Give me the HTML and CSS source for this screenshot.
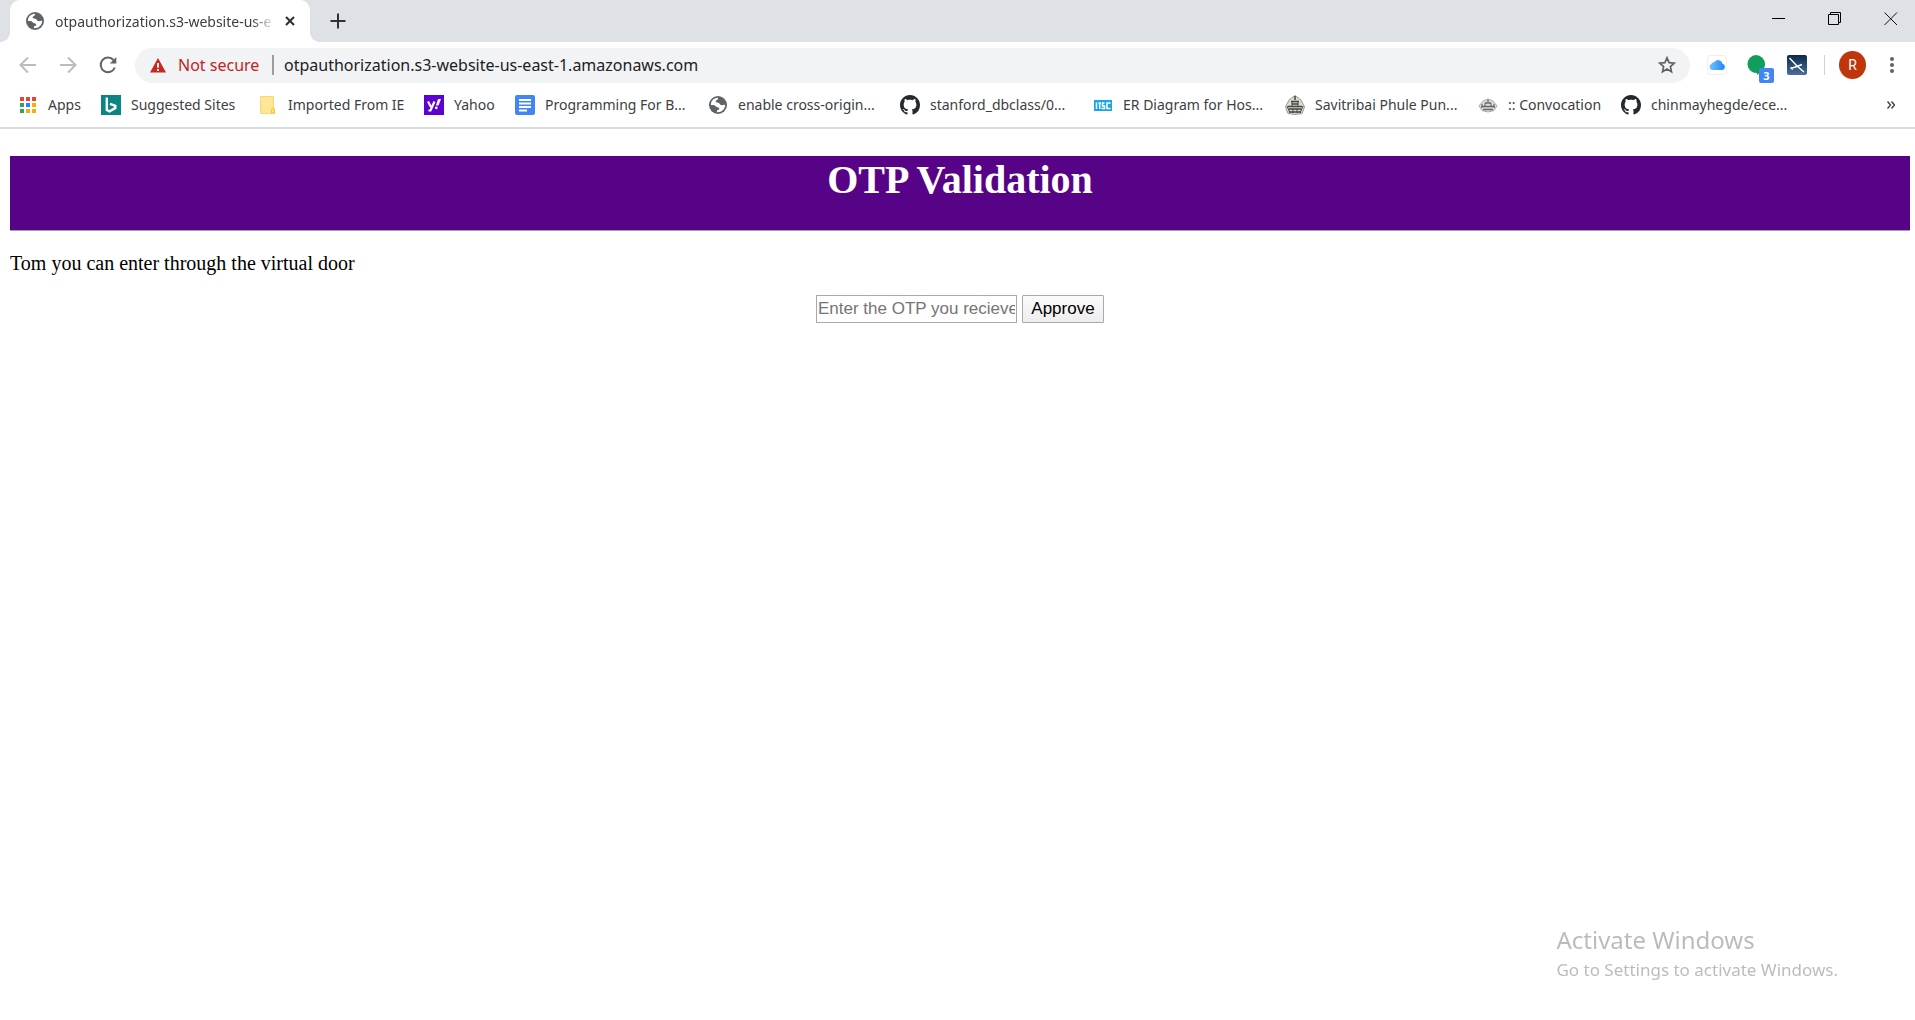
FILE: index.html
```html
<!DOCTYPE html>
<html lang="en">
<head>
<meta charset="utf-8">
<meta name="viewport" content="width=device-width, initial-scale=1">
<title>OTP Validation</title>
<link rel="stylesheet" href="styles.css">
</head>
<body>
<svg class="symbols" aria-hidden="true">
  <symbol id="globe" viewBox="0 0 20 20">
    <circle cx="10" cy="10" r="9" fill="#5f6368"/>
    <path d="M3 10C2.800 6 5.500 3 10 2.800C10.500 4 9.500 5 8 5.500C7 7 8 7.300 9.500 7.500C12 7.800 11.500 9.500 13 10C15 10.500 15.500 9.500 17.200 10C17 14 14 17.200 9.500 17.200C8.500 16.500 8.500 15.500 10 15C12 14.500 11.500 12.500 9.500 12.300C7.500 12 7.500 10 5 10Z" fill="#fff"/>
  </symbol>
  <symbol id="github" viewBox="0 0 16 16">
    <path fill="#24292e" d="M8 0C3.580 0 0 3.580 0 8c0 3.540 2.290 6.530 5.470 7.590.4.070.55-.17.55-.38 0-.19-.01-.82-.01-1.490-2.010.37-2.530-.49-2.690-.94-.09-.23-.48-.94-.82-1.130-.28-.15-.68-.52-.01-.53.63-.01 1.080.58 1.230.82.72 1.210 1.870.87 2.330.66.07-.52.28-.87.51-1.070-1.780-.2-3.640-.89-3.640-3.950 0-.87.31-1.590.82-2.150-.08-.2-.36-1.020.08-2.120 0 0 .67-.21 2.200.82.64-.18 1.320-.27 2-.27s1.360.09 2 .27c1.530-1.040 2.200-.82 2.200-.82.44 1.100.16 1.920.08 2.120.51.56.82 1.270.82 2.150 0 3.070-1.870 3.750-3.650 3.950.29.25.54.73.54 1.480 0 1.070-.01 1.930-.01 2.200 0 .21.15.46.55.38A8.010 8.010 0 0 0 16 8c0-4.420-3.580-8-8-8Z"/>
  </symbol>
</svg>

<header class="browser">
  <div class="tabstrip">
    <div class="tab">
      <svg class="icon"><use href="#globe"/></svg>
      <span class="tab-title">otpauthorization.s3-website-us-e</span>
      <button class="tab-close" aria-label="Close tab"><svg width="10" height="10" viewBox="0 0 10 10"><path d="M1 1L9 9M9 1L1 9" stroke="#2b2e31" stroke-width="2"/></svg></button>
    </div>
    <button class="new-tab" aria-label="New tab"><svg width="16" height="16" viewBox="0 0 16 16"><path d="M8 .5V15.500M.5 8H15.500" stroke="#303336" stroke-width="2"/></svg></button>
    <div class="window-buttons">
      <button aria-label="Minimize"><svg width="14" height="14" viewBox="0 0 14 14"><path d="M0 6.500H13" stroke="#000"/></svg></button>
      <button aria-label="Restore"><svg width="14" height="14" viewBox="0 0 14 14" fill="none" stroke="#000"><path d="M.5 2.500H10.500V12.500H.5ZM2.500 2.500V.5H12.500V10.500H10.500"/></svg></button>
      <button aria-label="Close"><svg width="14" height="14" viewBox="0 0 14 14"><path d="M.5.5L13 13M13 .5L.5 13" stroke="#111"/></svg></button>
    </div>
  </div>

  <div class="toolbar">
    <div class="nav">
      <button aria-label="Back"><svg width="18" height="18" viewBox="0 0 18 18" fill="none" stroke="#babcbe" stroke-width="2"><path d="M17 9H2M9 1.500L1.500 9L9 16.500"/></svg></button>
      <button aria-label="Forward"><svg width="18" height="18" viewBox="0 0 18 18" fill="none" stroke="#babcbe" stroke-width="2"><path d="M1 9H16M9 1.500L16.500 9L9 16.500"/></svg></button>
      <button aria-label="Reload"><svg width="18" height="18" viewBox="0 0 18 18"><path d="M15.800 11.500A7.300 7.300 0 1 1 14.500 4" fill="none" stroke="#5f6368" stroke-width="2"/><path d="M17.300 1V7.500H10.800Z" fill="#5f6368"/></svg></button>
    </div>
    <div class="omnibox">
      <svg class="warning" viewBox="0 0 16 15"><path d="M8 0L16 14.500H0Z" fill="#c5291f"/><path d="M8 5V9.800M8 11V13" stroke="#fff" stroke-width="1.800"/></svg>
      <span class="not-secure">Not secure</span>
      <input class="url" type="text" aria-label="Address" value="otpauthorization.s3-website-us-east-1.amazonaws.com">
      <button class="star" aria-label="Bookmark this page"><svg width="18" height="18" viewBox="0 0 18 18"><path d="M9 1.800L11.100 6.600L16.300 7.100L12.400 10.600L13.500 15.700L9 13L4.500 15.700L5.600 10.600L1.700 7.100L6.900 6.600Z" fill="none" stroke="#5f6368" stroke-width="1.700"/></svg></button>
    </div>
    <div class="extensions">
      <button aria-label="iCloud"><svg width="20" height="20" viewBox="0 0 20 20"><defs><linearGradient id="cloud"><stop stop-color="#6fc3fb"/><stop offset="1" stop-color="#2383f4"/></linearGradient></defs><rect x=".5" y=".5" width="19" height="19" rx="3" fill="#fff" stroke="#eee"/><path d="M5 15A3.300 3.300 0 0 1 4.500 8.800A3 3 0 0 1 7.500 7A4.400 4.400 0 0 1 15.500 8.800A3.200 3.200 0 0 1 15.500 15Z" fill="url(#cloud)"/></svg></button>
      <button class="chat" aria-label="Hangouts, 3 notifications"><svg width="20" height="20" viewBox="0 0 20 20"><path d="M9 0A9 9 0 0 1 18 9C18 14 14 17 10 20V18A9 9 0 1 1 9 0Z" fill="#119d5a"/></svg><span class="badge">3</span></button>
      <button aria-label="Flight extension"><svg width="20" height="20" viewBox="0 0 20 20"><defs><linearGradient id="sky" x2="0" y2="1"><stop stop-color="#0c294b"/><stop offset="1" stop-color="#4c6f98"/></linearGradient></defs><rect width="20" height="20" rx="2" fill="url(#sky)"/><path d="M2.500 3L10.500 11.500L17 17" fill="none" stroke="#fff" stroke-width="1.400"/><path d="M3.500 13.500L10 11.500L15 9.500" fill="none" stroke="#fff" stroke-width="1.600"/><path d="M4 12L5.500 15" stroke="#fff"/></svg></button>
    </div>
    <span class="divider"></span>
    <button class="avatar" aria-label="Profile">R</button>
    <button class="menu" aria-label="Menu"><svg width="4" height="18" viewBox="0 0 4 18" fill="#5f6368"><circle cx="2" cy="3" r="2"/><circle cx="2" cy="9" r="2"/><circle cx="2" cy="15" r="2"/></svg></button>
  </div>

  <nav class="bookmarks" aria-label="Bookmarks">
    <a href="#"><svg class="icon" viewBox="0 0 20 20"><g fill="#ea4335"><path d="M2 2h4v4H2zM8 2h4v4H8zM14 2h4v4h-4z"/></g><g fill="#34a15c"><path d="M2 8h4v4H2zM2 14h4v4H2z"/></g><path fill="#2586f4" d="M8 8h4v4H8z"/><g fill="#f6ae0b"><path d="M14 8h4v4h-4zM8 14h4v4H8zM14 14h4v4h-4z"/></g></svg>Apps</a>
    <a href="#"><svg class="icon" viewBox="0 0 20 20"><path fill="#0c8484" d="M0 0h20v20H0z"/><path d="M5.800 2.500V15L8.500 16.300L14.300 13V10.800L9 8.800" fill="none" stroke="#fff" stroke-width="2.400"/></svg>Suggested Sites</a>
    <a href="#"><svg class="icon" viewBox="0 0 20 20"><path d="M2.500 1.500H15.500V13.500L16.500 14.500V18.500H2.500Z" fill="#ffe694" stroke="#f5d775"/><path d="M13.500 18V14.500L15 12.500L16.500 14V18Z" fill="#ffe06d" stroke="#f0c642"/></svg>Imported From IE</a>
    <a href="#"><svg class="icon" viewBox="0 0 20 20"><path fill="#5f01d1" d="M0 0h20v20H0z"/><path d="M4 6.500L7 12M10.500 6.500L6.500 15.500H4.500" fill="none" stroke="#fff" stroke-width="2.200"/><path d="M14 4H17L14.500 10.500H12Z" fill="#fff"/><circle cx="12.300" cy="12.800" r="1.400" fill="#fff"/></svg>Yahoo</a>
    <a href="#"><svg class="icon" viewBox="0 0 20 20"><rect width="20" height="20" rx="2" fill="#4285f4"/><path d="M4 5H16M4 8.500H16M4 12H16M4 15.500H12" stroke="#fff" stroke-width="1.900"/></svg>Programming For B...</a>
    <a href="#"><svg class="icon"><use href="#globe"/></svg>enable cross-origin...</a>
    <a href="#"><svg class="icon"><use href="#github"/></svg>stanford_dbclass/0...</a>
    <a href="#"><svg class="icon" viewBox="0 0 20 20"><path fill="#18a5ea" d="M1 5h18v11H1z"/><path d="M3.500 14V7.500M5.500 8H8M6.700 8V14M11.500 8H9.500V11H11.500V13.500H8.500M17.500 8H14V13.500H17.500" fill="none" stroke="#fff" stroke-width="1.500"/></svg>ER Diagram for Hos...</a>
    <a href="#"><svg class="icon" viewBox="0 0 20 20" fill="none" stroke="#44443f"><path d="M10 .5L16 5L19.500 12L17 18.500L10 19.500L3 18.500L.5 12L4 5Z" fill="#dcdcd4" stroke="#99998f"/><path d="M10 1V5M6 6.500H14M7 9H13M3 11.500H17M4 14H16M4 17H16" stroke-width="1.500"/><path d="M7 6V12M13 6V12M2 11L5 18M18 11L15 18M8 14V18M12 14V18"/></svg>Savitribai Phule Pun...</a>
    <a href="#"><svg class="icon" viewBox="0 0 20 20" fill="none" stroke="#666"><path d="M10 4L15 6L19 11L16 15.500L10 17L4 15.500L1 11L5 6Z" fill="#ddd" stroke="#aaa"/><path d="M10 4.500V7M7 8H13M3 11.500H17M5 14.500H15" stroke-width="1.300"/><path d="M7 8V12M13 8V12M4 9V13M16 9V13"/></svg>:: Convocation</a>
    <a href="#"><svg class="icon"><use href="#github"/></svg>chinmayhegde/ece...</a>
    <button class="overflow" aria-label="More bookmarks"><svg width="8" height="8" viewBox="0 0 8 8" fill="none" stroke="#3c4043" stroke-width="1.400"><path d="M.5.5L3.500 4L.5 7.500M4.500.5L7.500 4L4.500 7.500"/></svg></button>
  </nav>
</header>

<main class="page">
  <h1 class="banner">OTP Validation</h1>
  <p class="message">Tom you can enter through the virtual door</p>
  <form class="otp-form">
    <input class="otp" type="text" placeholder="Enter the OTP you recieve" aria-label="OTP">
    <button class="approve" type="button">Approve</button>
  </form>
</main>

<aside class="watermark">
  <p class="watermark-title">Activate Windows</p>
  <p class="watermark-text">Go to Settings to activate Windows.</p>
</aside>
</body>
</html>
```
FILE: styles.css
```css
* { box-sizing: border-box; }

body {
  margin: 0;
  min-height: 100vh;
  background: #fff;
  color: #000;
  font-family: "Liberation Serif", "Times New Roman", serif;
}

button {
  display: inline-flex;
  align-items: center;
  justify-content: center;
  padding: 0;
  border: 0;
  background: none;
}

svg { display: block; flex: none; }
.symbols { position: absolute; width: 0; height: 0; }

.browser {
  border-bottom: 2px solid #dadbe0;
  font-family: "Noto Sans", "Open Sans", sans-serif;
  color: #3c4043;
}

.icon { width: 20px; height: 20px; }

/* Tab strip */
.tabstrip {
  display: flex;
  height: 42px;
  padding-left: 10px;
  background: #dee1e6;
}

.tab {
  position: relative;
  display: flex;
  align-items: center;
  width: 300px;
  padding: 0 14px 0 15px;
  border-radius: 10px 10px 0 0;
  background: #fff;
  font-size: 14px;
}

/* Flared feet on both sides of the active tab */
.tab::before,
.tab::after {
  content: "";
  position: absolute;
  bottom: 0;
  width: 10px;
  height: 10px;
}
.tab::before { left: -10px; background: radial-gradient(circle at 0 0, #dee1e6 10px, #fff 10px); }
.tab::after { right: -10px; background: radial-gradient(circle at 100% 0, #dee1e6 10px, #fff 10px); }

.tab-title {
  flex: 1;
  margin: 0 8px 0 10px;
  white-space: nowrap;
  -webkit-mask-image: linear-gradient(to left, transparent, #000 24px);
  mask-image: linear-gradient(to left, transparent, #000 24px);
}
.tab-close { width: 12px; height: 20px; }
.new-tab { width: 55px; }

.window-buttons { display: flex; height: 38px; margin-left: auto; }
.window-buttons button { width: 56px; }
.window-buttons button:last-child { width: 52px; padding-left: 4px; }

/* Toolbar */
.toolbar {
  display: flex;
  align-items: center;
  height: 46px;
  padding: 0 7px 0 8px;
}
.nav { display: flex; margin-right: 7px; }
.nav button { width: 40px; height: 36px; }

.omnibox {
  display: flex;
  flex: 1;
  align-items: center;
  height: 35px;
  padding: 0 14px 0 15px;
  border-radius: 18px;
  background: #f1f3f4;
  font-size: 16px;
}
.warning { width: 16px; height: 15px; }
.not-secure {
  width: 96px;
  margin: 0 10px 0 12px;
  border-right: 2px solid #9a9da1;
  color: #c5221f;
  line-height: 20px;
  white-space: nowrap;
}
.url {
  flex: 1;
  padding: 0;
  border: 0;
  background: none;
  color: #202124;
  font: inherit;
}

.extensions { display: flex; gap: 20px; margin-left: 17px; }
.chat { position: relative; }
.badge {
  position: absolute;
  left: 12px;
  top: 13px;
  width: 15px;
  height: 15px;
  border-radius: 2px;
  background: #4285f4;
  color: #fff;
  font: bold 11px/15px "Open Sans", sans-serif;
}
.divider { width: 1px; height: 20px; margin: 0 14px 0 17px; background: #cfd1d4; }
.avatar {
  width: 27px;
  height: 28px;
  border-radius: 50%;
  background: #bf360c;
  color: #fff;
  font: 14px Roboto, sans-serif;
}
.menu { width: 32px; height: 28px; margin-left: 10px; }

/* Bookmarks bar */
.bookmarks {
  display: grid;
  grid-template-columns: 83px 157px 166px 91px 193px 192px 193px 192px 193px 143px 1fr auto;
  height: 39px;
  padding: 0 20px 6px 18px;
}
.bookmarks a {
  display: flex;
  align-items: center;
  gap: 10px;
  color: inherit;
  font-size: 14px;
  text-decoration: none;
  white-space: nowrap;
}
.overflow { width: 8px; }

/* Page content */
.page { padding: 27px 5px 0 10px; }
.banner {
  height: 75px;
  margin: 0;
  border-bottom: 1px solid #a0a0a0;
  background: #570387;
  color: #fff;
  font-size: 40px;
  line-height: 48px;
  text-align: center;
}
.message { margin: 20px 0; font-size: 20px; line-height: 24px; }
.otp-form { display: flex; justify-content: center; gap: 5px; }
.otp,
.approve {
  height: 28px;
  border: 1px solid #a9a9a9;
  font: 17px "Liberation Sans", Arial, sans-serif;
}
.otp { width: 201px; padding: 1px; background: #fff; }
.otp::placeholder { color: #757575; }
.approve {
  width: 82px;
  border-radius: 1px;
  background: linear-gradient(#fbfbfb, #ededed);
  color: #000;
}

/* System notice floating above the page */
.watermark {
  position: fixed;
  right: 77px;
  bottom: 36px;
  color: #bcbcbc;
  font-family: "Noto Sans", "Open Sans", sans-serif;
}
.watermark p { margin: 0; }
.watermark-title { font-size: 24px; line-height: 32px; }
.watermark-text { font-size: 17px; line-height: 28px; }
```
